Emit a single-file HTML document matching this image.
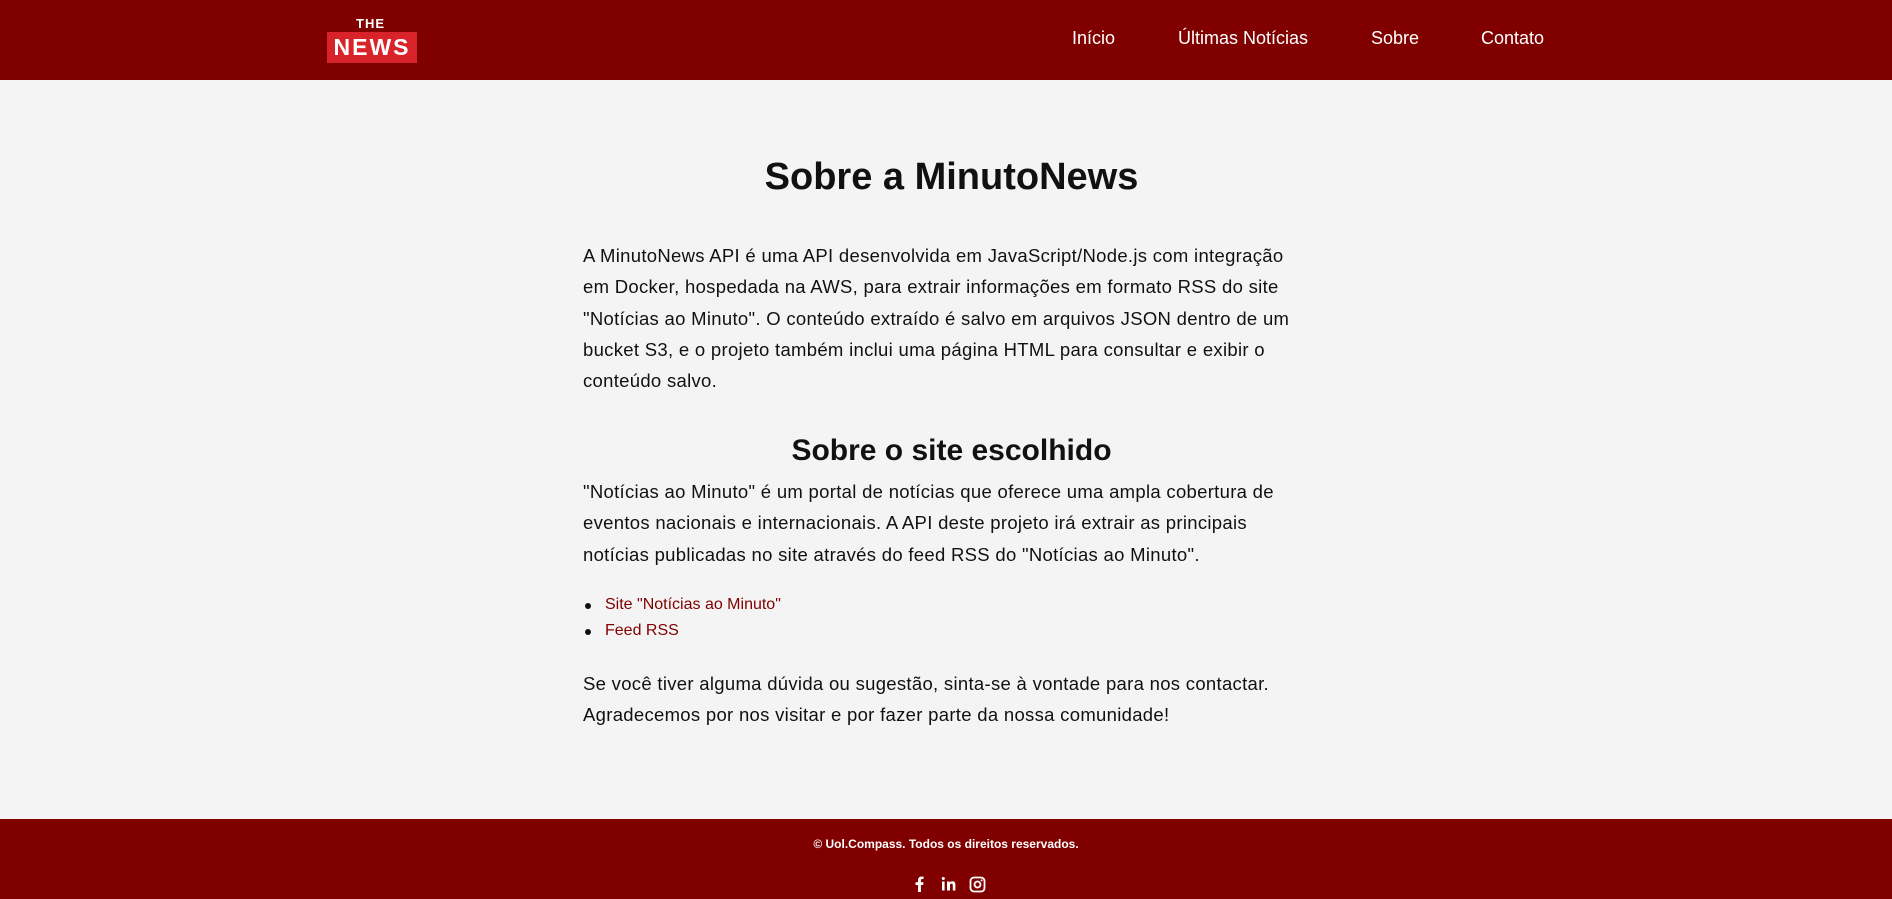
<!DOCTYPE html>
<html><head><meta charset="utf-8"><style>
*{margin:0;padding:0;box-sizing:border-box}
body{width:1892px;height:899px;background:#f4f4f4;font-family:"Liberation Sans",Arial,sans-serif;color:#111;position:relative;overflow:hidden}
header{position:absolute;left:0;top:0;width:1892px;height:80px;background:#800000}
.the{position:absolute;left:356px;top:16px;color:#fff;font-weight:bold;font-size:13px;letter-spacing:1px}
.news{position:absolute;left:327px;top:32px;width:90px;height:31px;background:#d8232a;color:#fff;font-weight:bold;font-size:23px;letter-spacing:2px;text-align:center;line-height:31px}
nav a{position:absolute;top:28px;color:#fff;font-size:18px;text-decoration:none}
main{position:absolute;left:583px;top:0;width:720px}
h1{position:absolute;left:0;width:737px;top:153px;text-align:center;font-size:38px;line-height:48px}
h2{position:absolute;left:0;width:737px;top:432px;text-align:center;font-size:30px;line-height:38px}
p{position:absolute;left:0;width:760px;font-size:18.5px;letter-spacing:0.3px;line-height:31.3px;white-space:nowrap}
ul{position:absolute;left:0;top:592px;list-style:none}
li{font-size:16px;line-height:26px;color:#800000;padding-left:22px;position:relative}
li:before{content:"";position:absolute;left:2px;top:11px;width:6px;height:6px;border-radius:50%;background:#111}
footer{position:absolute;left:0;top:819px;width:1892px;height:80px;background:#800000;color:#fff}
.copy{position:absolute;top:18px;width:100%;text-align:center;font-size:12px;font-weight:bold}
</style></head><body>
<header>
<div class="the">THE</div><div class="news">NEWS</div>
<nav><a style="left:1072px">Início</a><a style="left:1178px">Últimas Notícias</a><a style="left:1371px">Sobre</a><a style="left:1481px">Contato</a></nav>
</header>
<main>
<h1>Sobre a MinutoNews</h1>
<p style="top:240px">A MinutoNews API é uma API desenvolvida em JavaScript/Node.js com integração<br>em Docker, hospedada na AWS, para extrair informações em formato RSS do site<br>"Notícias ao Minuto". O conteúdo extraído é salvo em arquivos JSON dentro de um<br>bucket S3, e o projeto também inclui uma página HTML para consultar e exibir o<br>conteúdo salvo.</p>
<h2>Sobre o site escolhido</h2>
<p style="top:476px">"Notícias ao Minuto" é um portal de notícias que oferece uma ampla cobertura de<br>eventos nacionais e internacionais. A API deste projeto irá extrair as principais<br>notícias publicadas no site através do feed RSS do "Notícias ao Minuto".</p>
<ul><li>Site "Notícias ao Minuto"</li><li>Feed RSS</li></ul>
<p style="top:668px">Se você tiver alguma dúvida ou sugestão, sinta-se à vontade para nos contactar.<br>Agradecemos por nos visitar e por fazer parte da nossa comunidade!</p>
</main>
<footer>
<div class="copy">© Uol.Compass. Todos os direitos reservados.</div>
<svg style="position:absolute;left:912px;top:56px" width="80" height="18" viewBox="0 0 80 18" fill="#fff">
<path d="M6 17V10H3.5V7.3H6V5.3C6 2.9 7.4 1.5 9.6 1.5c1 0 1.8.1 2 .1v2.4h-1.4c-1.1 0-1.3.5-1.3 1.3v2h2.6l-.4 2.7H8.9V17z"/>
<rect x="30" y="6.5" width="2.6" height="9"/><circle cx="31.3" cy="3.5" r="1.5"/>
<path d="M35 6.5h2.5v1.3c.5-.9 1.6-1.5 2.9-1.5 2.4 0 3 1.5 3 3.6v5.6h-2.6v-5c0-1.1-.2-1.9-1.3-1.9s-1.5.8-1.5 1.9v5H35z"/>
<path fill="none" stroke="#fff" stroke-width="1.8" d="M62 2.5h7a3.5 3.5 0 0 1 3.5 3.5v7a3.5 3.5 0 0 1-3.5 3.5h-7a3.5 3.5 0 0 1-3.5-3.5V6A3.5 3.5 0 0 1 62 2.5z"/>
<circle cx="65.5" cy="9.5" r="3" fill="none" stroke="#fff" stroke-width="1.8"/><circle cx="69.6" cy="5.4" r="1"/>
</svg>
</footer>
</body></html>
